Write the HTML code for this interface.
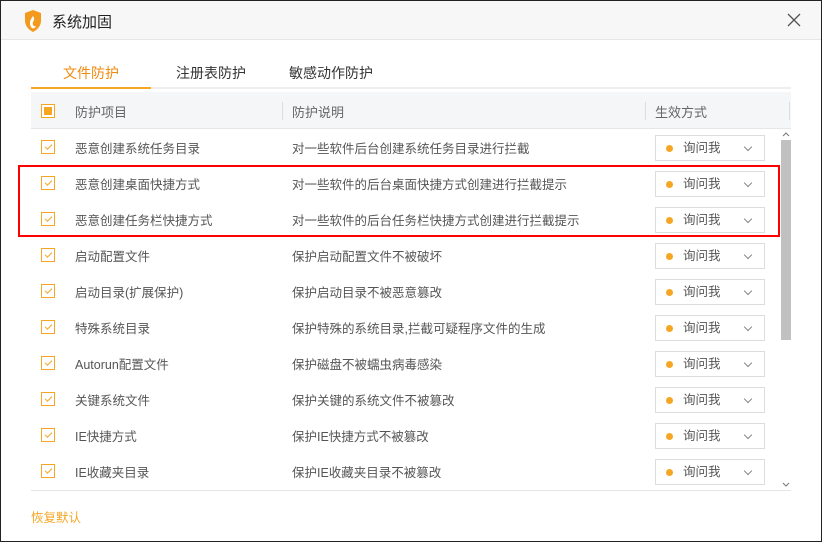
<!DOCTYPE html>
<html><head><meta charset="utf-8"><style>
*{margin:0;padding:0;box-sizing:border-box}
body{width:822px;height:542px;overflow:hidden;background:#fff;font-family:"Liberation Sans","Noto Sans CJK SC",sans-serif;position:relative}
.frame{position:absolute;left:0;top:0;width:822px;height:542px;border:1px solid #222;}
.title{position:absolute;left:1px;top:1px;width:820px;height:39px;background:#f7f7f7;border-bottom:1px solid #e6e6e6}
.title span{position:absolute;left:51px;top:10px;font-size:15px;color:#222}
.close{position:absolute;left:786px;top:12px}
.tab{position:absolute;top:63px;font-size:14px;color:#333}
.tabline{position:absolute;left:31px;top:87px;width:760px;height:2px;background:#eee}
.tabact{position:absolute;left:31px;top:87px;width:120px;height:2px;background:#f5a623}
.head{position:absolute;left:31px;top:92px;width:760px;height:37px;background:#f5f6f7;border-bottom:1px solid #e6e6e6}
.head div{position:absolute;top:10px;font-size:13px;color:#666}
.sep{position:absolute;top:10px;width:1px;height:18px;background:#ddd}
.row{position:absolute;left:31px;width:748px;height:36px}
.cb{position:absolute;left:10px;top:11px;width:14px;height:14px;border:1px solid #f5a623;background:#fff}
.cb:after{content:"";position:absolute;left:2.5px;top:2.5px;width:6px;height:3px;border-left:1.5px solid #f5a623;border-bottom:1.5px solid #f5a623;transform:rotate(-45deg)}
.t1,.t2{position:absolute;top:9px;font-size:12.5px;color:#555;white-space:nowrap}
.t1{left:44px}.t2{left:261px}
.dd{position:absolute;left:624px;top:6px;width:110px;height:26px;border:1px solid #ddd;background:#fff}
.dd i{position:absolute;left:10px;top:9px;width:7px;height:7px;border-radius:50%;background:#f5a623}
.dd span{position:absolute;left:27px;top:1px;font-size:12.5px;color:#555}
.dd b{position:absolute;left:89px;top:8px;width:6px;height:6px;border-right:1px solid #888;border-bottom:1px solid #888;transform:rotate(45deg)}
.sb{position:absolute;left:781px;top:140px;width:10px;height:200px;background:#c1c1c1}
.red{position:absolute;left:18px;top:165px;width:762px;height:72px;border:2px solid #f00}
</style></head><body>
<div class="title">
<svg style="position:absolute;left:23px;top:9px" width="18" height="22" viewBox="0 0 18 22"><path d="M1 3 L9 0 L17 3 L17 11 C17 16 13 20 9 22 C5 20 1 16 1 11Z" fill="#f39a1e"/><path d="M9 6 C6 10 5 13 7 17 C8 19 11 19 12 16 C10 17 8 15 9 12 C10 10 11 9 9 6Z" fill="#fff"/></svg>
<span>系统加固</span>
<svg class="close" width="14" height="14"><path d="M1 1L13 13M13 1L1 13" stroke="#555" stroke-width="1.3"/></svg>
</div>
<div class="tab" style="left:63px;color:#f08a10">文件防护</div>
<div class="tab" style="left:176px">注册表防护</div>
<div class="tab" style="left:289px">敏感动作防护</div>
<div class="tabline"></div><div class="tabact"></div>
<div class="head">
<span style="position:absolute;left:10px;top:12px;width:14px;height:14px;border:1px solid #f5a623;background:#fff"><span style="position:absolute;left:2px;top:2px;width:8px;height:8px;background:#f5a623"></span></span>
<div style="left:44px">防护项目</div><span class="sep" style="left:251px"></span>
<div style="left:261px">防护说明</div><span class="sep" style="left:614px"></span>
<div style="left:624px">生效方式</div><span class="sep" style="left:758px"></span>
</div>
<div class="row" style="top:129px"><div class="cb"></div><div class="t1">恶意创建系统任务目录</div><div class="t2">对一些软件后台创建系统任务目录进行拦截</div><div class="dd"><i></i><span>询问我</span><b></b></div></div>
<div class="row" style="top:165px"><div class="cb"></div><div class="t1">恶意创建桌面快捷方式</div><div class="t2">对一些软件的后台桌面快捷方式创建进行拦截提示</div><div class="dd"><i></i><span>询问我</span><b></b></div></div>
<div class="row" style="top:201px"><div class="cb"></div><div class="t1">恶意创建任务栏快捷方式</div><div class="t2">对一些软件的后台任务栏快捷方式创建进行拦截提示</div><div class="dd"><i></i><span>询问我</span><b></b></div></div>
<div class="row" style="top:237px"><div class="cb"></div><div class="t1">启动配置文件</div><div class="t2">保护启动配置文件不被破坏</div><div class="dd"><i></i><span>询问我</span><b></b></div></div>
<div class="row" style="top:273px"><div class="cb"></div><div class="t1">启动目录(扩展保护)</div><div class="t2">保护启动目录不被恶意篡改</div><div class="dd"><i></i><span>询问我</span><b></b></div></div>
<div class="row" style="top:309px"><div class="cb"></div><div class="t1">特殊系统目录</div><div class="t2">保护特殊的系统目录,拦截可疑程序文件的生成</div><div class="dd"><i></i><span>询问我</span><b></b></div></div>
<div class="row" style="top:345px"><div class="cb"></div><div class="t1">Autorun配置文件</div><div class="t2">保护磁盘不被蠕虫病毒感染</div><div class="dd"><i></i><span>询问我</span><b></b></div></div>
<div class="row" style="top:381px"><div class="cb"></div><div class="t1">关键系统文件</div><div class="t2">保护关键的系统文件不被篡改</div><div class="dd"><i></i><span>询问我</span><b></b></div></div>
<div class="row" style="top:417px"><div class="cb"></div><div class="t1">IE快捷方式</div><div class="t2">保护IE快捷方式不被篡改</div><div class="dd"><i></i><span>询问我</span><b></b></div></div>
<div class="row" style="top:453px"><div class="cb"></div><div class="t1">IE收藏夹目录</div><div class="t2">保护IE收藏夹目录不被篡改</div><div class="dd"><i></i><span>询问我</span><b></b></div></div>
<svg style="position:absolute;left:781px;top:131px" width="10" height="6"><path d="M2 5L5 2L8 5" stroke="#777" fill="none"/></svg>
<div class="sb"></div>
<svg style="position:absolute;left:781px;top:482px" width="10" height="6"><path d="M2 1L5 4L8 1" stroke="#777" fill="none"/></svg>
<div style="position:absolute;left:31px;top:490px;width:760px;height:1px;background:#e6e6e6"></div>
<div style="position:absolute;left:31px;top:507px;font-size:12.5px;color:#f5a623">恢复默认</div>
<div class="red"></div>
<div class="frame"></div>
</body></html>
